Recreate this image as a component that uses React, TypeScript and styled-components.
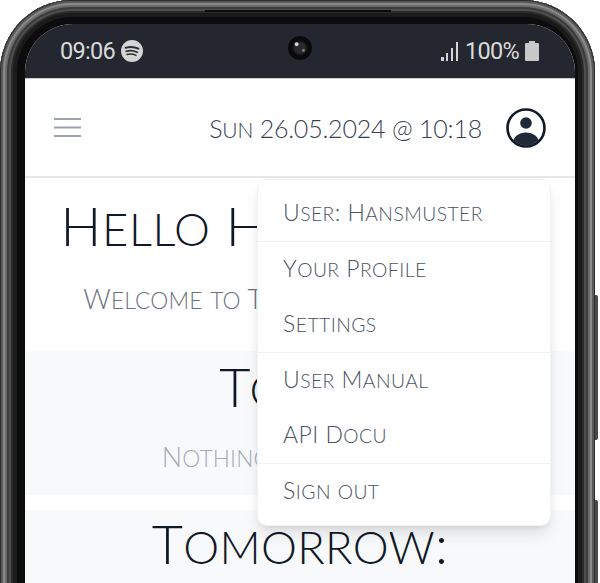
import React from "react";
import styled, { createGlobalStyle } from "styled-components";

const Global = createGlobalStyle`
  html, body { margin: 0; padding: 0; background: #fff; }
  body { width: 600px; height: 583px; overflow: hidden; font-family: "Lato", "Liberation Sans", sans-serif; }
`;

const Viewport = styled.div`
  width: 600px;
  height: 583px;
  overflow: hidden;
`;

const Phone = styled.div`
  position: relative;
  width: 595px;
  height: 700px;
  box-sizing: border-box;
  padding: 24px 20px 0 25px;
  border-radius: 72px;
  background: #0c0c0c;
  box-shadow:
    inset 0 0 0 1px #2c2c2c,
    inset 0 0 0 3px #5a5a5a,
    inset 0 0 0 5px #8a8a8a,
    inset 0 0 0 7px #6a6a6a,
    inset 0 0 0 9px #3c3c3c,
    inset 0 0 0 11px #4e4e4e,
    inset 0 0 0 13px #2a2a2a,
    inset 0 0 0 17px #1b1b1b;
`;

const Antenna = styled.div`
  position: absolute;
  left: 205px;
  top: 10px;
  width: 186px;
  height: 2px;
  background: #0a0a0a;
`;

const SideKey = styled.div<{ $top: number; $height: number }>`
  position: absolute;
  right: -3px;
  top: ${(p) => p.$top}px;
  width: 3px;
  height: ${(p) => p.$height}px;
  background: #4a4a4a;
  border-radius: 0 2px 2px 0;
`;

const Screen = styled.div`
  position: relative;
  height: 100%;
  overflow: hidden;
  border-radius: 48px 48px 0 0;
  background: #fff;
  display: flex;
  flex-direction: column;
`;

const StatusBar = styled.div`
  height: 55px;
  flex: none;
  box-sizing: border-box;
  padding: 0 36px 0 35px;
  display: flex;
  align-items: center;
  justify-content: space-between;
  background: #24272f;
  border-bottom: 1px solid #c9ccd2;
  color: #dadada;
  font-family: "Roboto", sans-serif;
  font-size: 23.5px;
  letter-spacing: -0.7px;
`;

const StatusGroup = styled.div`
  display: flex;
  align-items: center;
  gap: 6px;
`;

const Camera = styled.div`
  position: absolute;
  left: 263px;
  top: 12px;
  width: 24px;
  height: 24px;
  border-radius: 50%;
  background:
    radial-gradient(circle at 36% 34%, #d8d8d8 0 1.4px, transparent 2.4px),
    radial-gradient(circle at 64% 60%, #777 0 1px, transparent 2px),
    radial-gradient(circle at 50% 50%, #2a2a2e 0 5px, #0a0a0c 8px 100%);
`;

const Header = styled.header`
  height: 99px;
  flex: none;
  box-sizing: border-box;
  padding: 0 29px;
  display: flex;
  align-items: center;
  justify-content: space-between;
  border-bottom: 2px solid #e5e7eb;
`;

const Menu = styled.div`
  display: flex;
  align-items: center;
  gap: 24px;
`;

const HeaderDate = styled.div`
  color: #374151;
  font-size: 25px;
  font-weight: 300;
  letter-spacing: -0.2px;
  white-space: nowrap;
`;

const Section = styled.section<{ $tint?: boolean; $height: number; $top?: number }>`
  flex: none;
  height: ${(p) => p.$height}px;
  margin-top: ${(p) => p.$top ?? 0}px;
  background: ${(p) => (p.$tint ? "#f8f9fb" : "#fff")};
  display: flex;
  flex-direction: column;
  align-items: center;
`;

const Title = styled.h1<{ $pad: number; $spacing: number }>`
  margin: ${(p) => p.$pad}px 0 0;
  font-size: 54px;
  line-height: 60px;
  font-weight: 300;
  color: #111827;
  white-space: nowrap;
  letter-spacing: ${(p) => p.$spacing}px;
`;

const Subtitle = styled.p<{ $muted?: boolean; $pad: number }>`
  margin: ${(p) => p.$pad}px 0 0;
  font-size: 27px;
  line-height: 36px;
  font-weight: 300;
  color: ${(p) => (p.$muted ? "#a3abb8" : "#6b7280")};
  white-space: nowrap;
  letter-spacing: 0.2px;
`;

const Dropdown = styled.div`
  position: absolute;
  left: 232px;
  top: 155px;
  width: 294px;
  box-sizing: border-box;
  padding: 6px 0;
  background: #fff;
  border: 1px solid #f1f2f4;
  border-radius: 10px;
  box-shadow: 0 10px 16px -3px rgba(0, 0, 0, 0.12), 0 4px 6px -4px rgba(0, 0, 0, 0.1);
  display: flex;
  flex-direction: column;
`;

const MenuGroup = styled.div`
  & + & {
    border-top: 1px solid #f1f3f6;
  }
`;

const MenuItem = styled.div`
  height: 55px;
  box-sizing: border-box;
  padding: 0 25px;
  line-height: 52px;
  color: #4b5563;
  font-size: 23px;
  font-weight: 300;
  letter-spacing: 0.45px;
  white-space: nowrap;
`;

const Small = styled.span`
  font-size: 0.84em;
  text-transform: uppercase;
`;

function SC({ children }: { children: string }) {
  const parts = children.match(/[a-z]+|[^a-z]+/g) ?? [];
  return (
    <>
      {parts.map((part, i) =>
        /^[a-z]/.test(part) ? <Small key={i}>{part}</Small> : <span key={i}>{part}</span>
      )}
    </>
  );
}

const Spotify = () => (
  <svg width="22" height="22" viewBox="0 0 22 22">
    <circle cx="11" cy="11" r="11" fill="#d4d4d4" />
    <g fill="none" stroke="#2b2e35" strokeLinecap="round">
      <path d="M4.5 7.8c4.2-1.3 9-1 13 .9" strokeWidth="1.9" />
      <path d="M5.2 11.3c3.6-1 7.6-.7 11 .9" strokeWidth="1.7" />
      <path d="M6 14.5c3-.8 6.2-.5 9 .9" strokeWidth="1.4" />
    </g>
  </svg>
);

const Signal = () => (
  <svg width="18" height="20" viewBox="0 0 18 20" fill="#d4d4d4">
    <rect x="0" y="16" width="3" height="4" />
    <rect x="5" y="12" width="2" height="8" />
    <rect x="10" y="7" width="2" height="13" />
    <rect x="15" y="1" width="2" height="19" />
  </svg>
);

const Battery = () => (
  <svg width="14" height="20" viewBox="0 0 14 20" fill="#c8c8c8">
    <path d="M4 0h6v2h3a1 1 0 0 1 1 1v16a1 1 0 0 1-1 1H1a1 1 0 0 1-1-1V3a1 1 0 0 1 1-1h3z" />
  </svg>
);

const Burger = () => (
  <svg width="27" height="19" viewBox="0 0 27 19" fill="#9ca3af">
    <rect x="0" y="0" width="27" height="2" />
    <rect x="0" y="8.5" width="27" height="2" />
    <rect x="0" y="17" width="27" height="2" />
  </svg>
);

const UserIcon = () => (
  <svg width="40" height="40" viewBox="0 0 40 40">
    <defs>
      <clipPath id="userClip">
        <circle cx="20" cy="20" r="17.5" />
      </clipPath>
    </defs>
    <circle cx="20" cy="20" r="18.5" fill="#fff" stroke="#111827" strokeWidth="2.6" />
    <circle cx="20" cy="15" r="5.8" fill="#1f2937" />
    <ellipse cx="20" cy="35" rx="13" ry="10.5" fill="#1f2937" clipPath="url(#userClip)" />
  </svg>
);

export default function App() {
  return (
    <Viewport>
      <Global />
      <Phone>
        <Antenna />
        <SideKey $top={295} $height={145} />
        <SideKey $top={500} $height={110} />
        <Screen>
          <StatusBar>
            <StatusGroup>
              09:06
              <Spotify />
            </StatusGroup>
            <Camera />
            <StatusGroup>
              <Signal />
              100%
              <Battery />
            </StatusGroup>
          </StatusBar>
          <Header>
            <Burger />
            <Menu>
              <HeaderDate>
                <SC>Sun 26.05.2024 @ 10:18</SC>
              </HeaderDate>
              <UserIcon />
            </Menu>
          </Header>
          <Section $height={173}>
            <Title $pad={18} $spacing={0.6}>
              <SC>Hello Hansmuster</SC>
            </Title>
            <Subtitle $pad={22}>
              <SC>Welcome to The Calendar Portal</SC>
            </Subtitle>
          </Section>
          <Section $tint $height={144}>
            <Title $pad={6} $spacing={-1}>
              <SC>Today:</SC>
            </Title>
            <Subtitle $muted $pad={19}>
              <SC>Nothing planned yet!</SC>
            </Subtitle>
          </Section>
          <Section $tint $height={120} $top={15}>
            <Title $pad={4} $spacing={0.3}>
              <SC>Tomorrow:</SC>
            </Title>
          </Section>
          <Dropdown>
            <MenuGroup>
              <MenuItem><SC>User: Hansmuster</SC></MenuItem>
            </MenuGroup>
            <MenuGroup>
              <MenuItem><SC>Your Profile</SC></MenuItem>
              <MenuItem><SC>Settings</SC></MenuItem>
            </MenuGroup>
            <MenuGroup>
              <MenuItem><SC>User Manual</SC></MenuItem>
              <MenuItem><SC>API Docu</SC></MenuItem>
            </MenuGroup>
            <MenuGroup>
              <MenuItem><SC>Sign out</SC></MenuItem>
            </MenuGroup>
          </Dropdown>
        </Screen>
      </Phone>
    </Viewport>
  );
}
